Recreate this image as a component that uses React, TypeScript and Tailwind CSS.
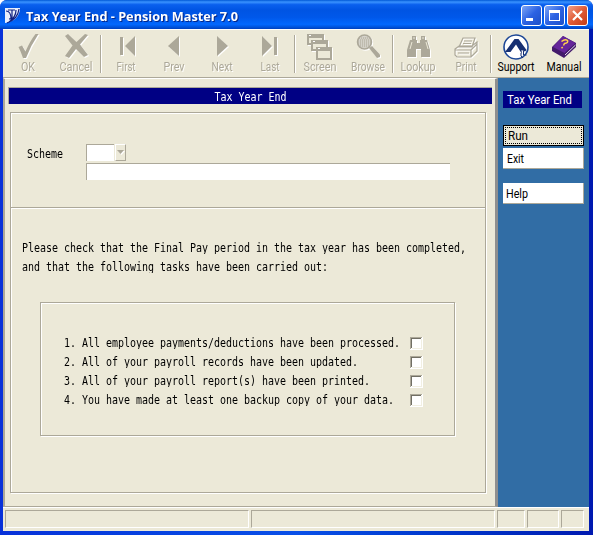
import React from "react";

const G = "#aca899";

function Emboss({ children }: { children: React.ReactNode }) {
  return (
    <svg width="48" height="30" viewBox="0 0 48 30" className="block">
      <g transform="translate(1 1)" fill="#fff" stroke="#fff" color="#fff" strokeWidth="0">{children}</g>
      <g fill={G} stroke={G} color={G} strokeWidth="0">{children}</g>
    </svg>
  );
}

function Tool({ label, icon, w, active }: { label: string; icon: React.ReactNode; w: number; active?: boolean }) {
  return (
    <div className="flex w-12 flex-col items-center">
      {icon}
      <svg width="48" height="17" className={active ? "overflow-visible fill-black" : "overflow-visible fill-[#aca899] [filter:drop-shadow(1px_1px_0_#fff)]"}>
        <text x={24 - w / 2} y="11" textLength={w} lengthAdjust="spacingAndGlyphs" fontSize="12.5" className="font-['Roboto',sans-serif]">{label}</text>
      </svg>
    </div>
  );
}

const Sep = () => <div className="mt-[5px] h-[38px] w-[2px] border-l border-r border-l-[#aca899] border-r-white" />;

const Mono = ({ children, className = "" }: { children: React.ReactNode; className?: string }) => (
  <span className={`inline-block origin-center scale-y-[1.18] whitespace-pre font-['DejaVu_Sans_Mono',monospace] text-[10px] leading-[19px] tracking-[-0.02px] ${className}`}>{children}</span>
);

const Side = ({ text, w, className = "fill-black" }: { text: string; w: number; className?: string }) => (
  <svg width={w + 4} height="17" className={`block shrink-0 overflow-visible ${className}`}>
    <text x="0" y="13" textLength={w} lengthAdjust="spacingAndGlyphs" fontSize="12.5" className="font-['Roboto',sans-serif]">{text}</text>
  </svg>
);

const WinBtn = ({ close, children }: { close?: boolean; children: React.ReactNode }) => (
  <div className={`h-[21px] w-[21px] rounded-[3px] border border-white bg-gradient-to-br ${close ? "from-[#f0a088] via-[#e05a35] to-[#c53a12]" : "from-[#7fa5f5] via-[#2c62e3] to-[#1c4fc9]"}`}>
    <svg width="19" height="19" viewBox="0 0 19 19">{children}</svg>
  </div>
);

const Check = () => (
  <svg width="13" height="13" shapeRendering="crispEdges" className="mt-[4px] block">
    <rect width="13" height="13" fill="#fff" />
    <path d="M0 12V0H12V1H1V12z" fill="#aca899" />
    <path d="M1 11V1H11V2H2V11z" fill="#716f64" />
    <path d="M2 11H11V2H12V12H2z" fill="#f1efe2" />
  </svg>
);

const tasks = [
  "1. All employee payments/deductions have been processed.",
  "2. All of your payroll records have been updated.",
  "3. All of your payroll report(s) have been printed.",
  "4. You have made at least one backup copy of your data.",
];

const screens = [
  [11, 4, 17, 11],
  [15, 10, 17, 11],
  [20, 17, 16, 13],
];

export default function App() {
  return (
    <div className="flex h-[535px] w-[593px] flex-col overflow-hidden rounded-t-[7px] bg-[#0831d9] bg-gradient-to-r from-[#0831d9] via-[#0a50e8] to-[#0019b0]">
      <header className="flex h-[29px] shrink-0 items-center bg-[linear-gradient(180deg,#0058d6_0%,#3a93ff_7%,#0a60ee_16%,#0054e3_35%,#0058ea_60%,#0268fe_84%,#0054dd_93%,#0040bd_100%)] pl-[4px] pr-[5px]">
        <svg width="17" height="17" viewBox="0 0 17 17" className="mt-[1px]">
          <path d="M1 1H16C16 9 10 15 1 16z" fill="#e8eefb" />
          <path d="M2 4Q7 4 7 12M4 3H11M8 3V10Q8 12 5 12M12 3Q12 10 5 15M15 2Q14 12 3 16" stroke="#102080" strokeWidth="1.2" fill="none" />
        </svg>
        <svg width="230" height="24" className="ml-[5px] mt-[2px] fill-white [filter:drop-shadow(1px_1px_0_#05288a)]">
          <text x="0" y="17" fontSize="13" textLength="212" lengthAdjust="spacingAndGlyphs" className="font-['Open_Sans',sans-serif] font-bold">Tax Year End - Pension Master 7.0</text>
        </svg>
        <div className="ml-auto mt-[2px] flex gap-[2px]">
          <WinBtn><rect x="4" y="12" width="7" height="3" fill="#fff" /></WinBtn>
          <WinBtn><path d="M4 4H15V15H4zM5 7V14H14V7z" fillRule="evenodd" fill="#fff" /></WinBtn>
          <WinBtn close><path d="M5 5L14 14M14 5L5 14" stroke="#fff" strokeWidth="2.2" /></WinBtn>
        </div>
      </header>

      <div className="ml-[3px] mr-[4px] flex h-[502px] shrink-0 flex-col bg-[#ece9d8]">
        <nav className="flex h-[49px] shrink-0 border-b border-t border-b-[#aca899] border-t-white pl-px">
          <Tool label="OK" w={14} icon={<Emboss><path d="M14.5 17L18 15.5L21.5 21.5Q26 11 31.5 4H34.5Q27 15 22 28H19Q17 22 14.5 17z" /></Emboss>} />
          <Tool label="Cancel" w={33} icon={<Emboss><path d="M13 6L16 4L24.5 12L33 4L36 5L28 14.5L36 25L32 27L24 19L17 28L13 26L20.5 15.5z" /></Emboss>} />
          <Sep />
          <Tool label="First" w={19} icon={<Emboss><path d="M18 7H21V25H18zM23 16L33 6V26z" /></Emboss>} />
          <Tool label="Prev" w={21} icon={<Emboss><path d="M18 16L29 6V26z" /></Emboss>} />
          <Tool label="Next" w={21} icon={<Emboss><path d="M30 16L19 6V26z" /></Emboss>} />
          <Tool label="Last" w={19} icon={<Emboss><path d="M26 16L16 6V26zM28 7H31V25H28z" /></Emboss>} />
          <Sep />
          <Tool label="Screen" w={33} icon={<Emboss>
            {screens.map(([x, y, w, h]) => (
              <g key={x} shapeRendering="crispEdges">
                <rect x={x} y={y} width={w} height={h} />
                <path d={`M${x + 2} ${y + 4}h${w - 4}v${h - 6}h-${w - 4}z`} fill="#ece9d8" />
                <rect x={x + 2} y={y + 1} width="2" height="1" fill="#fff" />
              </g>
            ))}
          </Emboss>} />
          <Tool label="Browse" w={34} icon={<Emboss>
            <circle cx="20.500" cy="12" r="7" strokeWidth="1.500" fillOpacity=".5" />
            <path d="M15 8h11M14 10h13M14 12h13M14 14h13M16 16h9" strokeWidth="1" strokeDasharray="1 1" />
            <path d="M25 18L28 16L36 24.500V27L33 28z" />
          </Emboss>} />
          <Sep />
          <Tool label="Lookup" w={35} icon={<Emboss>
            <path d="M18 6h4v4h1v3h3v-3h1V6h4v4h2l3 10v7h-9v-8h-5v8h-9v-7l3-10h2z" />
            <path d="M18 12l-2 7M32 12l2 7M19 8h2M28 8h2" stroke="#ece9d8" strokeWidth="1" />
          </Emboss>} />
          <Tool label="Print" w={21} icon={<Emboss>
            <path d="M17 17L21 8H33L30 17zM13 19L17 16H30L35 12V21L29 27H15L13 25zM13 20H29L35 14M29 20V27M22 11H30M21 13.5H29M16 23H27" fill="none" strokeWidth="1.2" />
          </Emboss>} />
          <Sep />
          <Tool label="Support" w={37} active icon={<svg width="48" height="30">
            <circle cx="24" cy="17" r="12" fill="#fff" stroke="#1d4796" strokeWidth="1.6" />
            <path d="M13 22L22.500 9H26.500L34.500 20L33 21.500L29.500 20L30 24L24 14.500L18.500 22z" fill="#173072" />
            <path d="M29 23V26L31 28M31.500 21V25H34.500" stroke="#173072" fill="none" />
          </svg>} />
          <Tool label="Manual" w={35} active icon={<svg width="48" height="30">
            <path d="M12 17L23 6L36 13V17L24 28L12 21z" fill="#431a6b" />
            <path d="M13 17L23 6L35.500 13L24.500 23z" fill="#65259a" />
            <path d="M25 25L35.500 15" stroke="#e5dced" strokeWidth="1" fill="none" />
            <path d="M21.500 11.500Q25 8.500 27.500 10.500Q28.500 13 24.500 13.500L23.500 15.500M22.700 17L21.500 18.200" stroke="#ffd34a" strokeWidth="1.500" fill="none" />
          </svg>} />
        </nav>

        <div className="flex h-[429px] shrink-0">
          <main className="flex w-[495px] shrink-0 flex-col border-b border-l-2 border-r-[3px] border-t border-b-[#aca899] border-l-[#aca899] border-r-[#8f8f8f] border-t-white pl-[3px]">
            <h1 className="mt-[8px] flex h-[17px] w-[484px] items-center justify-center border-l border-t border-[#aca899] bg-[#000084] text-white">
              <Mono>Tax Year End</Mono>
            </h1>
            <div className="ml-[2px] mt-[8px] h-[381px] w-[476px] border border-[#aca899] shadow-[inset_1px_1px_0_#fff,1px_1px_0_#fff]">
              <section className="flex h-[95px] border-b border-[#aca899] pt-[31px] shadow-[0_1px_0_#fff]">
                <div className="flex h-[19px] w-[75px] pl-[16px]"><Mono>Scheme</Mono></div>
                <div className="flex flex-col gap-[2px]">
                  <div className="flex gap-px">
                    <div className="h-[17px] w-[28px] border-l border-t border-[#aca899] bg-white" />
                    <div className="flex h-[17px] w-[11px] items-center justify-center border border-b-[#aca899] border-l-white border-r-[#aca899] border-t-white">
                      <svg width="8" height="5"><path d="M1 1h7L4.500 5z" fill="#fff" /><path d="M0 0h7L3.500 4z" fill="#aca899" /></svg>
                    </div>
                  </div>
                  <div className="h-[17px] w-[364px] border-l border-t border-[#aca899] bg-white" />
                </div>
              </section>
              <section className="pl-[11px] pt-[30px]">
                <p className="flex h-[19px]"><Mono>Please check that the Final Pay period in the tax year has been completed,</Mono></p>
                <p className="flex h-[19px]"><Mono>and that the following tasks have been carried out:</Mono></p>
                <div className="ml-[18px] mt-[26px] h-[134px] w-[415px] border border-[#aca899] pl-[23px] pt-[30px] shadow-[inset_1px_1px_0_#fff,1px_1px_0_#fff]">
                  {tasks.map((t) => (
                    <div key={t} className="flex h-[19px] w-[359px] items-start justify-between">
                      <Mono>{t}</Mono>
                      <Check />
                    </div>
                  ))}
                </div>
              </section>
            </div>
          </main>
          <aside className="flex flex-1 flex-col bg-[#316da5] pl-[5px]">
            <div className="mt-[13px] h-[17px] w-[79px] bg-[#000084] pl-[4px]"><Side text="Tax Year End" w={65} className="fill-white" /></div>
            <button className="mt-[17px] flex h-[21px] w-[81px] border border-black bg-[#ece9d8] p-px">
              <span className="flex h-full w-full items-center border border-dotted border-black pl-[2px]"><Side text="Run" w={20} /></span>
            </button>
            <button className="mt-[2px] flex h-[21px] w-[81px] items-center border-b border-r border-[#aca899] bg-white pl-[4px]"><Side text="Exit" w={17} /></button>
            <button className="mt-[14px] flex h-[21px] w-[81px] items-center border-b border-r border-[#aca899] bg-white pl-[3px]"><Side text="Help" w={22} /></button>
          </aside>
        </div>

        <footer className="flex h-[24px] gap-[2px] border-t border-white pl-[2px] pt-[2px]">
          {["w-[244px]", "w-[244px]", "w-[28px]", "w-[32px]", "w-[23px]"].map((w, i) => (
            <div key={i} className={`h-[18px] border border-b-white border-l-[#aca899] border-r-white border-t-[#aca899] ${w}`} />
          ))}
        </footer>
      </div>
    </div>
  );
}
